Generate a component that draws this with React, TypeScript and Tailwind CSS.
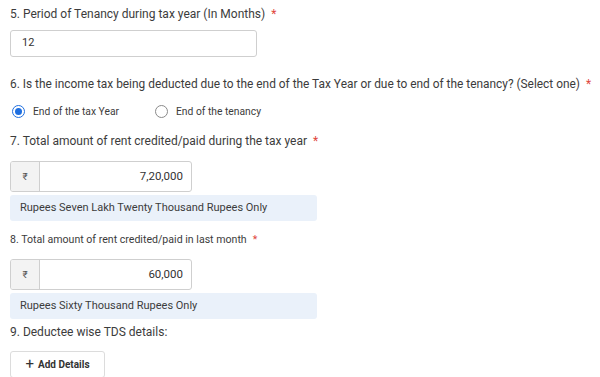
import type { ReactNode } from "react";

function Label({ children, size = "text-[12px]", star = true }: { children: ReactNode; size?: string; star?: boolean }) {
  return (
    <p className={`${size} leading-none text-[#3c3c3c]`}>
      {children}
      {star && <span className="ml-1.5 text-[#e0463c]">*</span>}
    </p>
  );
}

function Radio({ checked, label }: { checked?: boolean; label: string }) {
  return (
    <label className="flex items-center gap-2">
      <span
        className={`flex h-[13px] w-[13px] items-center justify-center rounded-full border ${
          checked ? "border-[#1f6fe0]" : "border-[#8a8a8a]"
        }`}
      >
        {checked && <span className="h-[7px] w-[7px] rounded-full bg-[#1f6fe0]" />}
      </span>
      <span className="text-[10.3px] text-[#3c3c3c]">{label}</span>
    </label>
  );
}

function Amount({ value, words }: { value: string; words: string }) {
  return (
    <div>
      <div className="flex h-[31px] w-[182px] overflow-hidden rounded-[3px] border border-[#cfcfcf]">
        <span className="flex w-[29px] items-center justify-center border-r border-[#cfcfcf] bg-[#f3f3f3] text-[10px] text-[#555]">
          ₹
        </span>
        <span className="flex flex-1 items-center justify-end pr-2 text-[11.5px] text-[#333]">{value}</span>
      </div>
      <div className="mt-[3px] flex h-[26px] w-[307px] items-center rounded-[3px] bg-[#eaf1fa] pl-[10px] text-[11px] text-[#3c3c3c]">
        {words}
      </div>
    </div>
  );
}

export default function App() {
  return (
    <main className="h-[377px] w-[600px] overflow-hidden bg-white pl-[10px] pt-[8px] font-['Roboto',sans-serif]">
      <Label>5. Period of Tenancy during tax year (In Months)</Label>
      <div className="mt-[10px] flex h-[27px] w-[247px] items-center rounded-[3px] border border-[#cfcfcf] pl-[11px] text-[11px] text-[#333]">
        12
      </div>

      <div className="mt-[22px]">
        <Label size="text-[11.9px]">
          6. Is the income tax being deducted due to the end of the Tax Year or due to end of the tenancy? (Select one)
        </Label>
      </div>
      <div className="mt-[13px] flex gap-[36px] pl-[2px]">
        <Radio checked label="End of the tax Year" />
        <Radio label="End of the tenancy" />
      </div>

      <div className="mt-[16px]">
        <Label>7. Total amount of rent credited/paid during the tax year</Label>
      </div>
      <div className="mt-[14px]">
        <Amount value="7,20,000" words="Rupees Seven Lakh Twenty Thousand Rupees Only" />
      </div>

      <div className="mt-[14px]">
        <Label size="text-[10.6px]">8. Total amount of rent credited/paid in last month</Label>
      </div>
      <div className="mt-[13px]">
        <Amount value="60,000" words="Rupees Sixty Thousand Rupees Only" />
      </div>

      <div className="mt-[7px]">
        <Label star={false}>9. Deductee wise TDS details:</Label>
      </div>
      <button className="mt-[13px] flex h-[27px] w-[95px] items-center justify-center gap-1 rounded-[3px] border border-[#dcdcdc] bg-white text-[10px] font-bold text-[#333]">
        <span className="text-[15px] font-normal leading-none">+</span>
        Add Details
      </button>
    </main>
  );
}
